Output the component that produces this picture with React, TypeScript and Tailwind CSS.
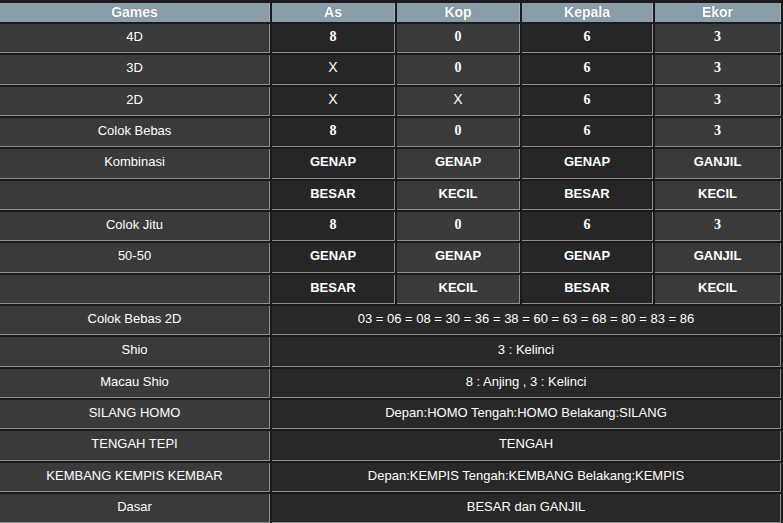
import React from 'react';

type Row = {
    game: string;
    values?: string[]; // four values for As, Kop, Kepala, Ekor
    span?: string; // merged value across all four columns
};

const rows: Row[] = [
    { game: '4D', values: ['8', '0', '6', '3'] },
    { game: '3D', values: ['X', '0', '6', '3'] },
    { game: '2D', values: ['X', 'X', '6', '3'] },
    { game: 'Colok Bebas', values: ['8', '0', '6', '3'] },
    { game: 'Kombinasi', values: ['GENAP', 'GENAP', 'GENAP', 'GANJIL'] },
    { game: '', values: ['BESAR', 'KECIL', 'BESAR', 'KECIL'] },
    { game: 'Colok Jitu', values: ['8', '0', '6', '3'] },
    { game: '50-50', values: ['GENAP', 'GENAP', 'GENAP', 'GANJIL'] },
    { game: '', values: ['BESAR', 'KECIL', 'BESAR', 'KECIL'] },
    { game: 'Colok Bebas 2D', span: '03 = 06 = 08 = 30 = 36 = 38 = 60 = 63 = 68 = 80 = 83 = 86' },
    { game: 'Shio', span: '3 : Kelinci' },
    { game: 'Macau Shio', span: '8 : Anjing , 3 : Kelinci' },
    { game: 'SILANG HOMO', span: 'Depan:HOMO Tengah:HOMO Belakang:SILANG' },
    { game: 'TENGAH TEPI', span: 'TENGAH' },
    { game: 'KEMBANG KEMPIS KEMBAR', span: 'Depan:KEMPIS Tengah:KEMBANG Belakang:KEMPIS' },
    { game: 'Dasar', span: 'BESAR dan GANJIL' },
];

const headers = ['Games', 'As', 'Kop', 'Kepala', 'Ekor'];

const cellBase = 'h-[29.33px] pb-[3px] flex items-center justify-center border-r border-b border-[#8e8e8e] text-white';

const ValueCell: React.FC<{ value: string; light: boolean }> = ({ value, light }) => {
    const isDigit = /^[0-9]$/.test(value);
    let content;
    if (isDigit) {
        content = <span className="font-bold text-[14px] font-['Liberation_Serif',serif]">{value}</span>;
    } else if (value === 'X') {
        content = <span className="text-[14px]">{value}</span>;
    } else {
        content = <span className="font-bold text-[13px]">{value}</span>;
    }
    return <div className={`${cellBase} ${light ? 'bg-[#3a3a3a]' : 'bg-[#262626]'}`}>{content}</div>;
};

export default function App() {
    return (
        <div className="w-[783px] h-[523px] overflow-hidden bg-[#1b1b1d] font-['Liberation_Sans',Arial,sans-serif]">
            <div className="grid grid-cols-[270px_123px_123px_131px_126px] gap-[2px] pt-[3px]">
                {headers.map(h => (
                    <div
                        key={h}
                        className="h-[19px] flex items-center justify-center bg-[#8a9ea9] border-r border-[#a3b3bc] text-white font-bold text-[14px] [text-shadow:0_0_1px_rgba(0,0,0,0.4)]"
                    >
                        {h}
                    </div>
                ))}

                {rows.map((row, i) => (
                    <React.Fragment key={i}>
                        <div className={`${cellBase} bg-[#3a3a3a] text-[13px]`}>{row.game}</div>
                        {row.values ? (
                            row.values.map((v, j) => <ValueCell key={j} value={v} light={j % 2 === 1} />)
                        ) : (
                            <div className={`${cellBase} col-span-4 bg-[#282828] text-[13px]`}>{row.span}</div>
                        )}
                    </React.Fragment>
                ))}
            </div>
        </div>
    );
}
